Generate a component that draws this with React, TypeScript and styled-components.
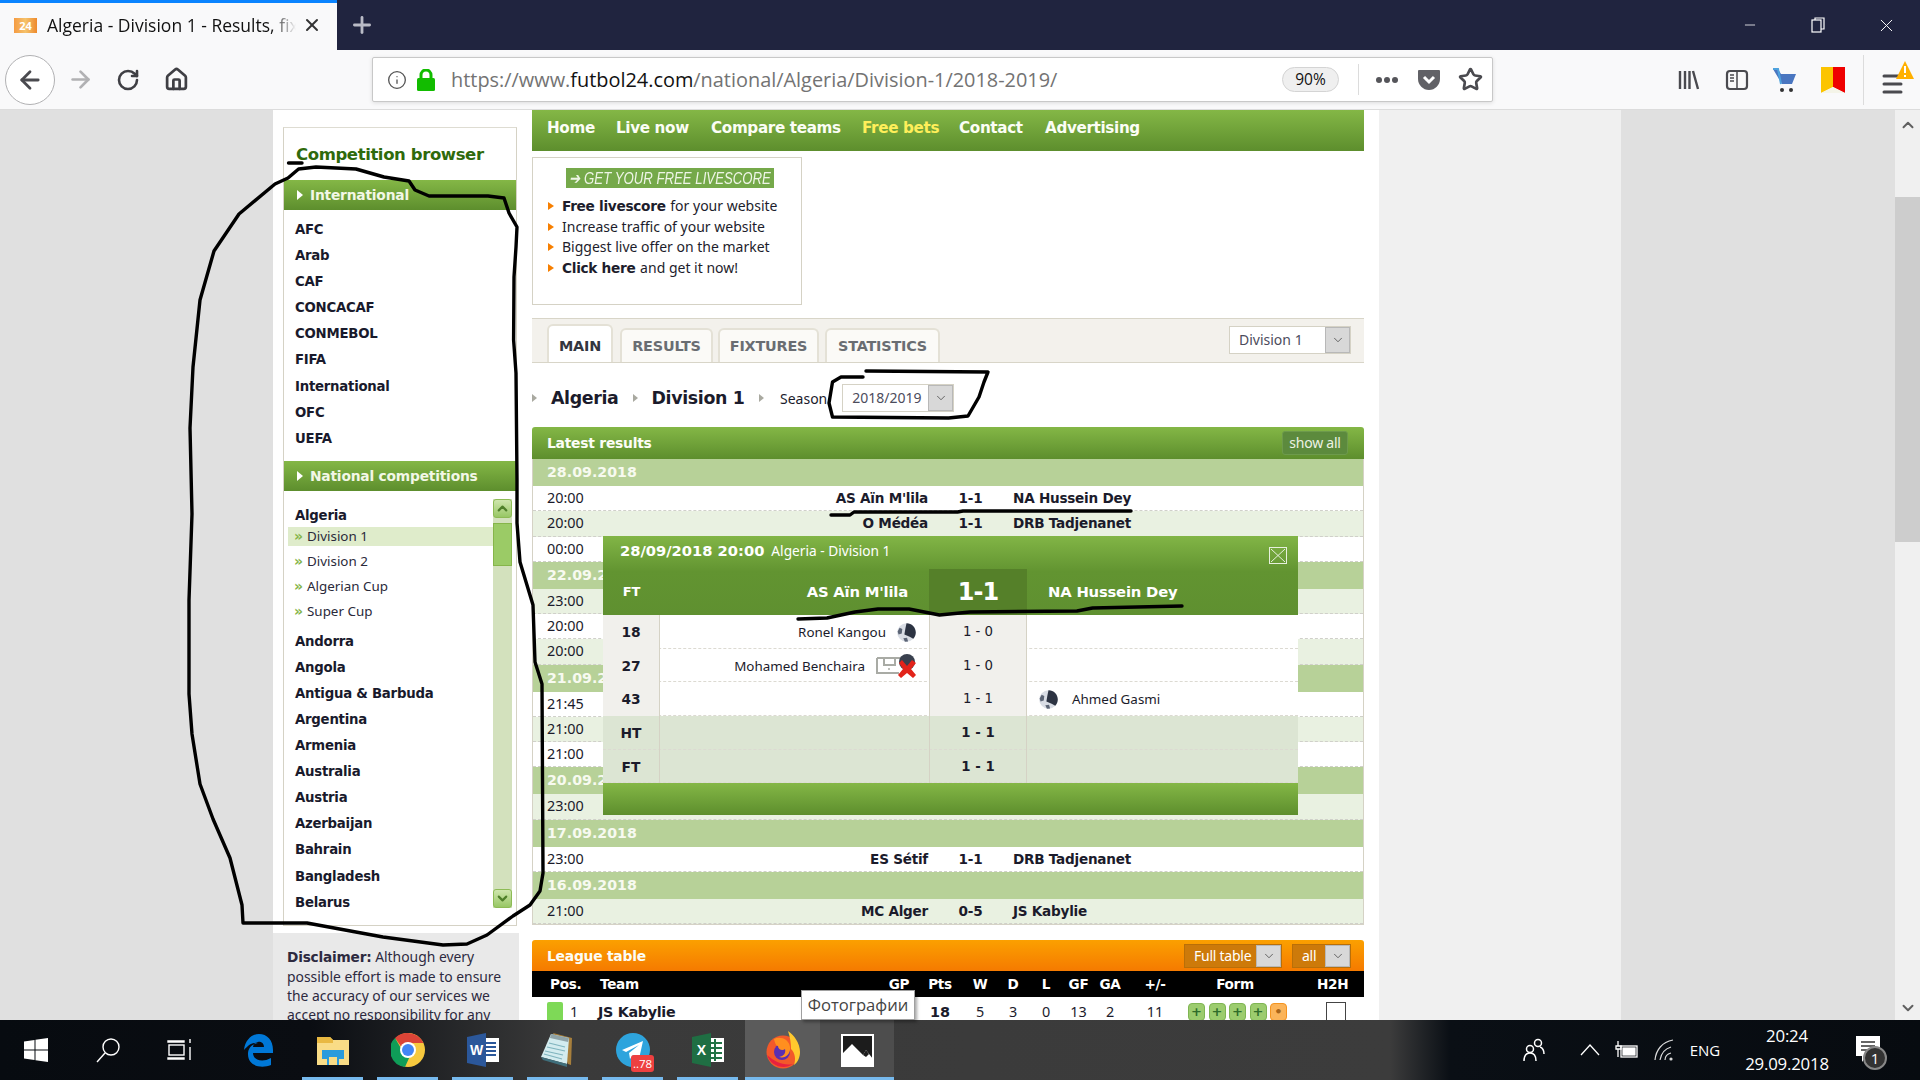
import React from "react";
import styled, { createGlobalStyle } from "styled-components";
import { ArrowLeft, ArrowRight, Home, Info, RotateCw, Star, X, Plus, Minus, ChevronDown, ChevronUp } from "lucide-react";

const UI = `"Open Sans", "Noto Sans", sans-serif`;
const SITE = `"DejaVu Sans", sans-serif`;
const THIN = `"Noto Sans", "Liberation Sans", sans-serif`;
const GREEN = "linear-gradient(#84b746, #5d8e2d)";

const GlobalStyle = createGlobalStyle`
  html, body { margin: 0; padding: 0; background: #fff; overflow: hidden; }
  * { box-sizing: border-box; }
`;

const Root = styled.div`
  position: relative;
  width: 1920px;
  height: 1080px;
  overflow: hidden;
  display: flex;
  flex-direction: column;
  font-family: ${SITE};
  color: #1b1b2b;
`;

/* browser chrome */
const TabBar = styled.div`
  height: 50px;
  background: #20243f;
  display: flex;
  align-items: center;
`;
const ActiveTab = styled.div`
  width: 337px;
  height: 50px;
  background: #f9f9fa;
  border-top: 3px solid #0a84ff;
  display: flex;
  align-items: center;
  padding: 0 0 3px 14px;
  gap: 10px;
  font: 17.5px ${UI};
  color: #111;
`;
const Favicon = styled.div`
  width: 23px;
  height: 15px;
  background: linear-gradient(90deg, #f59b42, #f5c26b 50%, #ee8a2c);
  color: #fff;
  font: bold 11px ${UI};
  text-align: center;
  line-height: 15px;
  flex: none;
`;
const TabTitle = styled.div`
  width: 249px;
  white-space: nowrap;
  overflow: hidden;
  -webkit-mask-image: linear-gradient(90deg, #000 90%, transparent);
  mask-image: linear-gradient(90deg, #000 90%, transparent);
`;
const NewTab = styled.div`
  margin-left: 12px;
  color: #b9bbc6;
  display: flex;
`;
const WindowControls = styled.div`
  margin-left: auto;
  display: flex;
  color: #fff;
`;
const WindowButton = styled.div`
  width: 68px;
  height: 50px;
  display: flex;
  align-items: center;
  justify-content: center;
`;
const NavBar = styled.div`
  height: 60px;
  background: #f9f9fa;
  border-bottom: 1px solid #dcdcdc;
  display: flex;
  align-items: center;
  padding-left: 5px;
  color: #4a4a4f;
`;
const BackCircle = styled.div`
  width: 50px;
  height: 50px;
  border-radius: 50%;
  border: 1px solid #b1b1b3;
  background: #fff;
  display: flex;
  align-items: center;
  justify-content: center;
`;
const NavIcon = styled.div<{ $w: number; $faded?: boolean }>`
  width: ${(p) => p.$w}px;
  display: flex;
  justify-content: center;
  color: ${(p) => (p.$faded ? "#b1b1b3" : "#3f3f44")};
`;
const UrlBar = styled.div`
  margin-left: 171px;
  width: 1121px;
  height: 45px;
  background: #fff;
  border: 1px solid #c8c8c8;
  border-radius: 2px;
  box-shadow: 0 1px 4px rgba(0, 0, 0, 0.12);
  display: flex;
  align-items: center;
  padding-left: 14px;
`;
const Url = styled.div`
  margin-left: 16px;
  font: 19.9px ${UI};
  color: #737373;
  white-space: nowrap;
  width: 831px;
  b { font-weight: 400; color: #111; }
`;
const Zoom = styled.div`
  width: 57px;
  height: 25px;
  border-radius: 13px;
  background: #efefef;
  border: 1px solid #d4d4d4;
  font: 15.5px/23px ${UI};
  color: #111;
  text-align: center;
`;
const UrlDivider = styled.div`
  width: 1px;
  height: 31px;
  background: #dcdcdc;
  margin: 0 16px 0 19px;
`;
const Tools = styled.div`
  display: flex;
  align-items: center;
  margin-left: 172px;
  position: relative;
`;
const ToolSlot = styled.div`
  width: 48px;
  display: flex;
  justify-content: center;
`;
const ToolDivider = styled.div`
  width: 1px;
  height: 50px;
  background: #dcdcdc;
  margin: 0 18px 0 6px;
`;

/* page */
const Viewport = styled.div`
  height: 910px;
  display: flex;
  overflow: hidden;
`;
const Gutter = styled.div<{ $w: number; $c: string }>`
  width: ${(p) => p.$w}px;
  background: ${(p) => p.$c};
  flex: none;
`;
const SideColumn = styled.div`
  width: 259px;
  flex: none;
  background: #fff;
  padding-top: 17px;
`;
const SideBox = styled.div`
  margin-left: 10px;
  width: 234px;
  height: 799px;
  border: 1px solid #d5d2c5;
  border-top-color: #dedcd2;
`;
const SideTitle = styled.h2`
  margin: 0;
  height: 52px;
  padding: 17px 0 0 12px;
  font: bold 16.5px/20px ${SITE};
  letter-spacing: -0.4px;
  color: #2f6a0c;
`;
const Band = styled.div`
  height: 30px;
  background: ${GREEN};
  color: #f2f7e6;
  font: bold 13.8px/30px ${SITE};
  letter-spacing: -0.2px;
  display: flex;
  align-items: center;
  gap: 7px;
  padding-left: 13px;
  &::before {
    content: "";
    border-left: 6px solid #fff;
    border-top: 5px solid transparent;
    border-bottom: 5px solid transparent;
  }
`;
const IntlList = styled.div`
  padding: 6.5px 0 8.5px 0;
`;
const Country = styled.div<{ $h?: number }>`
  height: ${(p) => p.$h ?? 26.2}px;
  padding-left: 11px;
  font: bold 13.3px/26px ${SITE};
  letter-spacing: -0.25px;
  color: #191a2c;
`;
const NationalArea = styled.div`
  display: flex;
`;
const NationalList = styled.div`
  width: 209px;
  padding-top: 12px;
`;
const SubList = styled.div`
  padding: 0 0 2px 4px;
`;
const SubItem = styled.div<{ $active?: boolean }>`
  height: 19px;
  margin-bottom: 6px;
  padding-left: 6px;
  display: flex;
  align-items: center;
  gap: 5px;
  font: 13.4px/19px ${THIN};
  color: #2a2a3a;
  background: ${(p) => (p.$active ? "#dfeccb" : "transparent")};
  &::before {
    content: "»";
    color: #86b54a;
    font: bold 14px/14px ${SITE};
    width: 8px;
  }
`;
const ListScroll = styled.div`
  width: 19px;
  height: 409px;
  margin-top: 8px;
  background: #d3e1bd;
  display: flex;
  flex-direction: column;
  justify-content: space-between;
  position: relative;
`;
const ListArrow = styled.div`
  width: 19px;
  height: 19px;
  border: 1px solid #8dbb55;
  border-radius: 3px;
  background: linear-gradient(#cfe6ae, #98c765);
  color: #4f7f2a;
  display: flex;
  align-items: center;
  justify-content: center;
`;
const ListThumb = styled.div`
  position: absolute;
  top: 24px;
  left: 0;
  width: 19px;
  height: 43px;
  background: #9bcb66;
  border: 1px solid #86b54a;
`;
const Disclaimer = styled.div`
  margin: 7px 0 0 -10px;
  width: 246px;
  background: #e9e9e9;
  padding: 14px 4px 0 14px;
  font: 13.9px/19px ${THIN};
  color: #2d2a3f;
  b { font-family: ${SITE}; font-size: 13.7px; letter-spacing: -0.2px; }
`;
const SideInner = styled.div`
  margin-left: 10px;
`;

const Main = styled.div`
  width: 832px;
  flex: none;
  background: #fff;
  display: flex;
  flex-direction: column;
  & > * { flex-shrink: 0; }
`;
const TopNav = styled.nav`
  height: 41px;
  background: ${GREEN};
  display: flex;
  align-items: center;
  padding: 0 0 5px 15px;
`;
const NavLink = styled.a<{ $hot?: boolean; $w: number }>`
  width: ${(p) => p.$w}px;
  font: bold 15.2px/28px ${SITE};
  letter-spacing: -0.35px;
  color: ${(p) => (p.$hot ? "#ffef5a" : "#fbfdf5")};
  white-space: nowrap;
`;
const AdBox = styled.div`
  margin-top: 6px;
  width: 270px;
  height: 148px;
  border: 1px solid #d5d2c5;
  padding: 10px 0 0 15px;
`;
const AdBanner = styled.div`
  margin-left: 18px;
  width: 208px;
  height: 20px;
  background: #75a94a;
  color: #eef5e6;
  font: italic 16.5px/20px "Liberation Sans", sans-serif;
  text-align: center;
  white-space: nowrap;
  margin-bottom: 8px;
  overflow: hidden;
  span {
    display: inline-block;
    transform: scaleX(0.8);
    transform-origin: center;
    margin: 0 -30px;
  }
`;
const AdLine = styled.div`
  height: 20.6px;
  display: flex;
  align-items: center;
  gap: 8px;
  font: 14px/20px ${THIN};
  white-space: nowrap;
  color: #1d1d2c;
  b { font-family: ${SITE}; font-size: 13.7px; letter-spacing: -0.3px; margin-right: 1px; }
  &::before {
    content: "";
    border-left: 6px solid #f77f00;
    border-top: 4px solid transparent;
    border-bottom: 4px solid transparent;
  }
`;
const TabStrip = styled.div`
  margin-top: 13px;
  height: 45px;
  background: #f3f1ec;
  border-top: 1px solid #d8d5c8;
  border-bottom: 1px solid #d8d5c8;
  display: flex;
  align-items: flex-end;
  padding-left: 15px;
  position: relative;
`;
const SiteTab = styled.div<{ $w: number; $active?: boolean; $gap: number }>`
  width: ${(p) => p.$w}px;
  margin-right: ${(p) => p.$gap}px;
  height: ${(p) => (p.$active ? 38 : 34)}px;
  background: ${(p) => (p.$active ? "#fff" : "#fbfaf7")};
  border: 2px solid #e4e1d6;
  border-bottom: none;
  border-radius: 6px 6px 0 0;
  padding-top: ${(p) => (p.$active ? 4 : 0)}px;
  font: bold 14.4px/32px ${SITE};
  letter-spacing: -0.2px;
  color: ${(p) => (p.$active ? "#33363f" : "#6a6d72")};
  text-align: center;
`;
const Select = styled.div<{ $w: number; $h?: number; $tone?: string; $color?: string }>`
  width: ${(p) => p.$w}px;
  height: ${(p) => p.$h ?? 28}px;
  flex: none;
  display: flex;
  background: ${(p) => p.$tone ?? "#fff"};
  color: ${(p) => p.$color ?? "#4c4c5c"};
  font: 14px/${(p) => (p.$h ?? 28) - 2}px ${THIN};
  padding-left: 9px;
  justify-content: space-between;
  border: 1px solid ${(p) => (p.$tone ? "#b96f08" : "#d5d2c5")};
`;
const SelectArrow = styled.div`
  width: 25px;
  background: #d8d8d8;
  border: 1px solid #b8b8b8;
  color: #333;
  display: flex;
  align-items: center;
  justify-content: center;
`;
const StripSelect = styled.div`
  position: absolute;
  right: 13px;
  top: 7px;
`;
const Crumbs = styled.div`
  height: 64px;
  display: flex;
  align-items: center;
  padding-top: 6px;
`;
const CrumbArrow = styled.span`
  border-left: 5px solid #a9a9a0;
  border-top: 4px solid transparent;
  border-bottom: 4px solid transparent;
  flex: none;
`;
const CrumbName = styled.span`
  font: bold 17.4px/24px ${SITE};
  letter-spacing: -0.35px;
  margin: 0 14px;
`;
const SeasonLabel = styled.span`
  margin: 1px 15px 0 16.5px;
  font: 14px/20px ${THIN};
`;
const PanelHead = styled.div<{ $orange?: boolean }>`
  height: ${(p) => (p.$orange ? 31 : 32)}px;
  background: ${(p) => (p.$orange ? "linear-gradient(#fba000, #f57a00)" : GREEN)};
  border-radius: 3px 3px 0 0;
  display: flex;
  align-items: center;
  padding: 0 16px 0 15px;
  color: #fcfdf6;
  font: bold 13.9px/20px ${SITE};
  letter-spacing: -0.25px;
`;
const PanelTitle = styled.div`
  margin-right: auto;
`;
const ShowAll = styled.div`
  width: 66px;
  height: 24px;
  background: #5c8a3d;
  border: 1px solid #6d9a4c;
  border-radius: 3px;
  font: 14px/22px ${THIN};
  color: #eef3e4;
  text-align: center;
`;
const Results = styled.div`
  height: 466px;
  border: 1px solid #d5d2c5;
  border-top: none;
  display: flex;
  flex-direction: column;
`;
const DateRow = styled.div`
  flex: 1;
  background: #b7d198;
  color: #f7faf0;
  font: bold 14.2px/27px ${SITE};
  padding-left: 14px;
`;
const MatchRow = styled.div<{ $alt?: boolean }>`
  flex: 1;
  display: grid;
  grid-template-columns: 119px 276px 85px 1fr;
  align-items: center;
  background: ${(p) => (p.$alt ? "#e9f1e1" : "#fff")};
  border-bottom: 1px dashed #d0d0ca;
  font: bold 13.6px/20px ${SITE};
  letter-spacing: -0.25px;
  span:first-child { font: 14.4px/20px ${THIN}; padding-left: 14px; letter-spacing: 0; }
  span:nth-child(2) { text-align: right; }
  span:nth-child(3) { text-align: center; }
`;
const League = styled.div`
  margin-top: 15px;
`;
const LeagueSelects = styled.div`
  display: flex;
  gap: 10px;
  margin-right: -3px;
`;
const LeagueGrid = styled.div<{ $head?: boolean }>`
  height: ${(p) => (p.$head ? 26 : 28)}px;
  background: ${(p) => (p.$head ? "#000" : "#fff")};
  color: ${(p) => (p.$head ? "#fff" : "#1b1b2b")};
  display: grid;
  grid-template-columns: 66px 282px 38px 44px 36px 30px 36px 29px 34px 56px 104px 1fr;
  align-items: center;
  text-align: center;
  font: ${(p) => (p.$head ? "bold 13.6px/26px" : "14.4px/30px")} ${(p) => (p.$head ? SITE : THIN)};
  letter-spacing: ${(p) => (p.$head ? "-0.3px" : "0")};
`;
const LeftCell = styled.span<{ $pad: number; $bold?: boolean }>`
  text-align: left;
  padding-left: ${(p) => p.$pad}px;
  font-family: ${(p) => (p.$bold ? SITE : "inherit")};
  font-weight: ${(p) => (p.$bold ? "bold" : "inherit")};
  ${(p) => p.$bold && "font-size: 14.3px; letter-spacing: -0.3px;"}
`;
const Points = styled.b`
  font: bold 14.4px/30px ${SITE};
`;
const PosCell = styled.span`
  display: flex;
  align-items: center;
  gap: 7px;
  padding-left: 15px;
  &::before {
    content: "";
    width: 16px;
    height: 20px;
    border-radius: 2px;
    background: #7ed957;
  }
`;
const FormCell = styled.span`
  display: flex;
  gap: 3.5px;
  padding-left: 5px;
`;
const FormPill = styled.span<{ $orange?: boolean }>`
  width: 17px;
  height: 18px;
  border-radius: 4px;
  background: ${(p) => (p.$orange ? "#fbb45a" : "#9ccc6e")};
  border: 1px solid ${(p) => (p.$orange ? "#f5941f" : "#7fb553")};
  color: ${(p) => (p.$orange ? "#a8651a" : "#2f6d2a")};
  font: bold 13px/15px ${SITE};
  text-align: center;
`;
const H2H = styled.span`
  width: 20px;
  height: 20px;
  margin-left: 39px;
  border: 1px solid #444;
  background: #fff;
`;

/* match popup */
const Popup = styled.div`
  position: absolute;
  left: 603px;
  top: 536px;
  width: 695px;
  height: 279px;
  background: #fff;
  display: flex;
  flex-direction: column;
`;
const PopHead = styled.div`
  height: 79px;
  background: linear-gradient(#82b546 0, #629431 45%, #5f9030);
  color: #fff;
`;
const PopTitle = styled.div`
  height: 33px;
  padding: 4px 0 0 17px;
  display: flex;
  gap: 7px;
  position: relative;
  font: bold 14.7px/21px ${SITE};
  span { font: 13.7px/22px ${THIN}; font-weight: 400; }
`;
const PopClose = styled.div`
  position: absolute;
  right: 11px;
  top: 11px;
  width: 18px;
  height: 17px;
  border: 1px solid #e7f0dd;
  display: flex;
  color: #e7f0dd;
`;
const PopTeams = styled.div`
  display: grid;
  grid-template-columns: 57px 269px 98px 1fr;
  height: 46px;
  align-items: center;
  font: bold 14.8px/46px ${SITE};
  letter-spacing: -0.2px;
`;
const PopFt = styled.span`
  text-align: center;
  font-size: 13px;
`;
const PopHome = styled.span`
  text-align: right;
  padding-right: 21px;
`;
const PopScore = styled.span`
  height: 46px;
  background: #558029;
  text-align: center;
  font: bold 24px/46px ${SITE};
  letter-spacing: -1px;
`;
const PopAway = styled.span`
  padding-left: 21px;
`;
const EventRow = styled.div<{ $summary?: boolean }>`
  display: grid;
  grid-template-columns: 57px 269px 98px 1fr;
  height: 33.7px;
  background: ${(p) => (p.$summary ? "#dce5d3" : "#fff")};
  border-bottom: 1px dashed #dcdad2;
  font: 13.4px/34px ${THIN};
  text-align: center;
`;
const EventMinute = styled.div<{ $summary?: boolean }>`
  background: ${(p) => (p.$summary ? "transparent" : "#f1f0ec")};
  border-right: 1px solid #d5d2c5;
  font: bold 13.8px/34px ${SITE};
`;
const EventHome = styled.div`
  display: flex;
  align-items: center;
  justify-content: flex-end;
  padding-right: 13px;
  gap: 11px;
`;
const EventMid = styled.div<{ $summary?: boolean }>`
  background: ${(p) => (p.$summary ? "transparent" : "#f1f0ec")};
  border-left: 1px solid #d5d2c5;
  border-right: 1px solid #d5d2c5;
  font: ${(p) => (p.$summary ? "bold 13.3px/34px" : "13.3px/34px")} ${SITE};
`;
const EventAway = styled.div`
  display: flex;
  align-items: center;
  padding-left: 12px;
  gap: 14px;
`;
const PopFoot = styled.div`
  flex: 1;
  background: ${GREEN};
`;

const PageScroll = styled.div`
  width: 25px;
  flex: none;
  background: #f0f0f0;
  position: relative;
  display: flex;
  flex-direction: column;
  align-items: center;
  justify-content: space-between;
  padding: 3px 0;
  color: #606060;
`;
const PageThumb = styled.div`
  position: absolute;
  top: 87px;
  left: 0;
  width: 25px;
  height: 345px;
  background: #cdcdcd;
`;

/* taskbar */
const Taskbar = styled.div`
  height: 60px;
  background: linear-gradient(90deg, #070b10 0, #0a0d12 310px, #3a3a3a 560px, #3c3c3c 1390px, #0a0f15 1450px, #070b10 100%);
  display: flex;
  align-items: center;
  color: #fff;
`;
const TaskSlot = styled.div<{ $w: number; $running?: boolean; $tone?: string; $inset?: number }>`
  width: ${(p) => p.$w}px;
  height: 60px;
  flex: none;
  background: ${(p) => p.$tone ?? "transparent"};
  display: flex;
  align-items: center;
  justify-content: center;
  position: relative;
  &::after {
    content: "";
    position: absolute;
    bottom: 0;
    left: ${(p) => p.$inset ?? 7}px;
    right: ${(p) => p.$inset ?? 7}px;
    height: ${(p) => (p.$running ? 3 : 0)}px;
    background: #76b9ed;
  }
`;
const Tray = styled.div`
  margin-left: auto;
  display: flex;
  align-items: center;
  padding-right: 30px;
  font: 15px ${UI};
`;
const TrayIcon = styled.div<{ $w: number }>`
  width: ${(p) => p.$w}px;
  display: flex;
  justify-content: center;
`;
const Clock = styled.div`
  width: 118px;
  text-align: center;
  font: 16.8px/28px ${UI};
  letter-spacing: -0.2px;
`;
const BadgeWrap = styled.div`
  position: relative;
  width: 44px;
  display: flex;
  justify-content: center;
`;
const NotifyBadge = styled.div`
  position: absolute;
  right: 3px;
  top: 10px;
  width: 24px;
  height: 24px;
  border-radius: 50%;
  background: #333;
  border: 2px solid #888;
  font: 15px/20px ${UI};
  text-align: center;
`;
const TgBadge = styled.div`
  position: absolute;
  left: 36px;
  top: 35px;
  width: 23px;
  height: 17px;
  border-radius: 3px;
  background: #ee4040;
  font: 11.5px/17px ${UI};
  text-align: center;
`;
const Tooltip = styled.div`
  position: absolute;
  left: 801px;
  top: 990px;
  width: 114px;
  height: 30px;
  background: #fff;
  border: 1px solid #a0a0a0;
  box-shadow: 2px 2px 3px rgba(0, 0, 0, 0.35);
  font: 16.6px/28px ${UI};
  text-align: center;
  color: #444;
  z-index: 3;
`;
const Scribble = styled.svg`
  position: absolute;
  left: 0;
  top: 0;
  pointer-events: none;
  z-index: 2;
`;

const Ball = () => (
  <svg width="19" height="19" viewBox="0 0 18 18">
    <circle cx="9" cy="9" r="8.8" fill="#d9dde5" />
    <path d="M9 .2c5 0 8.8 4 8.8 8.8 0 2.4-1 4.5-2.4 6L12 13 7 11l1-6 1-4.8z" fill="#2c3342" />
    <path d="M2.5 4.5l2.5 1.2L4.5 10 1.5 11 .6 8zM6 14.5l3.5-.6 1 3.6-3 .2z" fill="#5b6475" />
  </svg>
);

const RedCardGoal = () => (
  <svg width="40" height="24" viewBox="0 0 40 24">
    <path d="M1 4h24M1 4v15h22M8 4v7h11V4" fill="none" stroke="#a9aba5" strokeWidth="2" />
    <circle cx="13" cy="15" r="1" fill="#a9aba5" />
    <circle cx="31" cy="8" r="8" fill="#39404e" />
    <path d="M31 12l5-6 4 3-5 6 5 6-3 3-6-5-6 5-3-3 5-6-4-6 3-3z" fill="#e2231a" />
  </svg>
);

const Pocket = () => (
  <svg width="24" height="24" viewBox="0 0 24 24">
    <path d="M2 2h20a1 1 0 0 1 1 1v8c0 6-5 11-11 11S1 17 1 11V3a1 1 0 0 1 1-1z" fill="#616166" />
    <path d="M7 9l5 5 5-5" fill="none" stroke="#fff" strokeWidth="3" />
  </svg>
);
const LibraryIcon = () => (
  <svg width="24" height="24" viewBox="0 0 24 24" stroke="#4a4a4f" strokeWidth="2.4" fill="none">
    <path d="M3 3v18M8 3v18M12.5 3v18M16 3l5 18" />
  </svg>
);
const SidebarIcon = () => (
  <svg width="24" height="24" viewBox="0 0 24 24" fill="none" stroke="#4a4a4f" strokeWidth="2.2">
    <rect x="2" y="3" width="20" height="18" rx="3" />
    <path d="M12 3v18M5 7h4M5 10h4M5 13h4" strokeWidth="1.5" />
  </svg>
);
const Cart = () => (
  <svg width="26" height="26" viewBox="0 0 26 26">
    <path d="M1 2h5l3 5h15l-4 10H10z" fill="#4a76c0" />
    <path d="M1 2h5l3 15" fill="none" stroke="#4ea2dd" strokeWidth="2" />
    <circle cx="10" cy="23" r="2" fill="#333" />
    <circle cx="19" cy="23" r="2" fill="#333" />
  </svg>
);
const BookmarkFlag = () => (
  <svg width="24" height="26" viewBox="0 0 24 26">
    <path d="M0 0h12v20L0 26z" fill="#fcc400" />
    <path d="M12 0h12v26l-12-6z" fill="#ef0000" />
    <path d="M12 20l12 6H0z" fill="#f4f4e8" />
  </svg>
);
const MenuIcon = () => (
  <svg width="34" height="42" viewBox="0 0 34 42">
    <path d="M2 17h17M2 25h17M2 33h17" stroke="#4a4a4f" strokeWidth="3" strokeLinecap="round" />
    <path d="M23 2l9 18H14z" fill="#ffb000" />
    <path d="M23 7v7M23 16v2" stroke="#fff" strokeWidth="2" />
  </svg>
);
const Lock = () => (
  <svg width="18" height="22" viewBox="0 0 18 22">
    <path d="M4 10V6a5 5 0 0 1 10 0v4" fill="none" stroke="#12bc00" strokeWidth="3" />
    <rect x="0" y="9" width="18" height="13" rx="1.5" fill="#12bc00" />
  </svg>
);
const WinLogo = () => (
  <svg width="24" height="24" viewBox="0 0 24 24" fill="#fff">
    <path d="M0 3.5L10.5 2v9.5H0zM11.5 1.8L24 0v11.5H11.5zM0 12.5h10.5V22L0 20.5zM11.5 12.5H24V24l-12.5-1.8z" />
  </svg>
);
const SearchGlyph = () => (
  <svg width="26" height="26" viewBox="0 0 26 26" fill="none" stroke="#fff" strokeWidth="1.4">
    <circle cx="16" cy="10" r="8" />
    <path d="M10 16L2 25" />
  </svg>
);
const TaskView = () => (
  <svg width="26" height="24" viewBox="0 0 26 24" fill="none" stroke="#fff" strokeWidth="1.4">
    <path d="M1 3h16v1H1zM1 20h16v1H1z" />
    <rect x="2" y="7" width="15" height="10" />
    <path d="M23 1v4M23 9v13" />
  </svg>
);
const Edge = () => (
  <svg width="32" height="34" viewBox="0 0 32 34">
    <path d="M2 17C3 7 10 1 17 1c8 0 14 6 14 16v3H11c0 7 9 10 18 5v7c-10 4-23 1-23-11 0-6 4-10 10-11-7-1-11 4-14 7zM11 14h11c0-7-10-7-11 0z" fill="#0078d7" />
  </svg>
);
const Folder = () => (
  <svg width="32" height="30" viewBox="0 0 32 30">
    <path d="M0 2h13l3 3h16v25H0z" fill="#f9dc86" />
    <path d="M0 2h13l3 3v3H0z" fill="#e9b942" />
    <path d="M5 24V15h22v9h-5v6H10v-6z" fill="#2a9bdc" />
    <path d="M12 22h8v8h-8z" fill="#f9dc86" />
  </svg>
);
const Chrome = () => (
  <svg width="34" height="34" viewBox="0 0 34 34">
    <circle cx="17" cy="17" r="17" fill="#f7c93e" />
    <path d="M17 0a17 17 0 0 1 15.5 10H17a7 7 0 0 0-6.5 4L4 5A17 17 0 0 1 17 0z" fill="#db4437" />
    <path d="M4 5l7 12a7 7 0 0 0 8 6l-5 11A17 17 0 0 1 4 5z" fill="#0f9d58" />
    <circle cx="17" cy="17" r="8" fill="#fff" />
    <circle cx="17" cy="17" r="6" fill="#4285f4" />
  </svg>
);
const Word = () => (
  <svg width="32" height="34" viewBox="0 0 32 34">
    <rect x="12" y="5" width="20" height="24" fill="#fff" />
    <path d="M15 10h14M15 14h14M15 18h14M15 22h14" stroke="#2b579a" strokeWidth="2" />
    <path d="M0 4l19-4v34L0 30z" fill="#2b579a" />
    <text x="9.5" y="22" fill="#fff" fontSize="14" fontWeight="700" textAnchor="middle" fontFamily="Liberation Sans">W</text>
  </svg>
);
const Notepad = () => (
  <svg width="34" height="34" viewBox="0 0 34 34">
    <path d="M12 0l19 5-1 27-3-1z" fill="#a77f3c" />
    <path d="M10 1l18 4-2 26L0 24z" fill="#d3ecef" />
    <path d="M10 1l18 4-1 4-18-4z" fill="#8fa3a8" />
    <path d="M8 10l16 4M6 14l18 4M4 18l18 4M3 21l18 5" stroke="#7fb4be" strokeWidth="1.2" />
    <path d="M0 24l26 7v3L2 27z" fill="#3f6f7c" />
  </svg>
);
const Telegram = () => (
  <svg width="34" height="34" viewBox="0 0 34 34">
    <circle cx="17" cy="17" r="17" fill="#2ea4dd" />
    <path d="M6 17L27 8l-4 18-6-4-3 4-1-6 10-8-13 7z" fill="#fff" />
  </svg>
);
const Excel = () => (
  <svg width="32" height="34" viewBox="0 0 32 34">
    <rect x="13" y="5" width="19" height="24" fill="#fff" />
    <path d="M16 10h14M16 15h14M16 20h14M16 25h14M23 6v22" stroke="#217346" strokeWidth="2" />
    <path d="M0 4l19-4v34L0 30z" fill="#1f6e43" />
    <text x="9.5" y="22" fill="#fff" fontSize="14" fontWeight="700" textAnchor="middle" fontFamily="Liberation Sans">X</text>
  </svg>
);
const Firefox = () => (
  <svg width="34" height="38" viewBox="0 0 34 38">
    <circle cx="17" cy="21" r="16.5" fill="#f2592a" />
    <path d="M22 0c6 4 12 12 12 21 0 5-2 10-6 13 2-6 1-12-3-16 0-6-1-12-3-18z" fill="#ffc92e" />
    <circle cx="16" cy="21" r="8" fill="#5a2fb0" />
    <path d="M8 8c6-3 15 0 16 8 1 7-5 12-11 10 5-1 7-4 6-8-2 2-7 1-7-3-2 0-3-3-4-7z" fill="#ff8f1f" />
    <path d="M1 24c3 10 16 16 26 9-9 2-18-2-26-9z" fill="#e8213f" />
  </svg>
);
const Photos = () => (
  <svg width="33" height="33" viewBox="0 0 33 33">
    <rect width="33" height="33" fill="#fff" />
    <rect x="2" y="2" width="29" height="29" fill="#1c1c1c" />
    <path d="M1 20l10-10 11 11 3-5 7 9v7H1z" fill="#fff" />
    <path d="M22 21l3-5 3 4-3 3z" fill="#1c1c1c" />
  </svg>
);

type Row = { date: string } | { time: string; home?: string; score?: string; away?: string };

const rows: Row[] = [
  { date: "28.09.2018" },
  { time: "20:00", home: "AS Aïn M'lila", score: "1-1", away: "NA Hussein Dey" },
  { time: "20:00", home: "O Médéa", score: "1-1", away: "DRB Tadjenanet" },
  { time: "00:00" },
  { date: "22.09.2018" },
  { time: "23:00" },
  { time: "20:00" },
  { time: "20:00" },
  { date: "21.09.2018" },
  { time: "21:45" },
  { time: "21:00" },
  { time: "21:00" },
  { date: "20.09.2018" },
  { time: "23:00" },
  { date: "17.09.2018" },
  { time: "23:00", home: "ES Sétif", score: "1-1", away: "DRB Tadjenanet" },
  { date: "16.09.2018" },
  { time: "21:00", home: "MC Alger", score: "0-5", away: "JS Kabylie" },
];

const intl = ["AFC", "Arab", "CAF", "CONCACAF", "CONMEBOL", "FIFA", "International", "OFC", "UEFA"];
const countries = ["Andorra", "Angola", "Antigua & Barbuda", "Argentina", "Armenia", "Australia", "Austria", "Azerbaijan", "Bahrain", "Bangladesh", "Belarus"];
const navLinks = [
  { label: "Home", w: 69 },
  { label: "Live now", w: 95 },
  { label: "Compare teams", w: 151 },
  { label: "Free bets", w: 97, hot: true },
  { label: "Contact", w: 86 },
  { label: "Advertising", w: 100 },
];
const heads = ["GP", "Pts", "W", "D", "L", "GF", "GA", "+/-", "Form"];
const slots = [
  { icon: <Edge /> },
  { icon: <Folder />, on: true },
  { icon: <Chrome />, on: true },
  { icon: <Word />, on: true },
  { icon: <Notepad />, on: true },
  { icon: <Telegram />, on: true, badge: true },
  { icon: <Excel />, on: true },
];

const Arrow = () => (
  <SelectArrow>
    <ChevronDown size={14} strokeWidth={1.2} />
  </SelectArrow>
);

const App = () => {
  let alt = false;
  return (
    <Root>
      <GlobalStyle />
      <TabBar>
        <ActiveTab>
          <Favicon>24</Favicon>
          <TabTitle>Algeria - Division 1 - Results, fixtures</TabTitle>
          <X size={20} strokeWidth={2.4} color="#333" style={{ marginLeft: -4 }} />
        </ActiveTab>
        <NewTab>
          <Plus size={26} strokeWidth={2.6} />
        </NewTab>
        <WindowControls>
          <WindowButton>
            <Minus size={16} strokeWidth={1.2} />
          </WindowButton>
          <WindowButton>
            <svg width="14" height="16" viewBox="0 0 14 16" fill="none" stroke="#fff" strokeWidth="1.2">
              <rect x="1" y="3" width="9" height="12" />
              <path d="M4 3V1h9v11h-3" />
            </svg>
          </WindowButton>
          <WindowButton>
            <X size={21} strokeWidth={1.1} />
          </WindowButton>
        </WindowControls>
      </TabBar>
      <NavBar>
        <BackCircle>
          <ArrowLeft size={28} strokeWidth={2.4} />
        </BackCircle>
        <NavIcon $w={50} $faded>
          <ArrowRight size={27} strokeWidth={2.4} />
        </NavIcon>
        <NavIcon $w={46}>
          <RotateCw size={24} strokeWidth={2.6} />
        </NavIcon>
        <NavIcon $w={50}>
          <Home size={25} strokeWidth={2.6} />
        </NavIcon>
        <UrlBar>
          <Info size={20} strokeWidth={1.6} color="#555" />
          <span style={{ width: 10 }} />
          <Lock />
          <Url>
            https://www.<b>futbol24.com</b>/national/Algeria/Division-1/2018-2019/
          </Url>
          <Zoom>90%</Zoom>
          <UrlDivider />
          <svg width="24" height="8" viewBox="0 0 24 8" fill="#55555a">
            <circle cx="4" cy="4" r="3" />
            <circle cx="12" cy="4" r="3" />
            <circle cx="20" cy="4" r="3" />
          </svg>
          <span style={{ width: 18 }} />
          <Pocket />
          <span style={{ width: 17 }} />
          <Star size={25} strokeWidth={2.6} color="#4a4a4f" />
        </UrlBar>
        <Tools>
          <ToolSlot><LibraryIcon /></ToolSlot>
          <ToolSlot><SidebarIcon /></ToolSlot>
          <ToolSlot><Cart /></ToolSlot>
          <ToolSlot><BookmarkFlag /></ToolSlot>
          <ToolDivider />
          <MenuIcon />
        </Tools>
      </NavBar>

      <Viewport>
        <Gutter $w={273} $c="#e0e0e0" />
        <SideColumn>
          <SideBox>
            <SideTitle>Competition browser</SideTitle>
            <Band>International</Band>
            <IntlList>
              {intl.map((name) => (
                <Country key={name}>{name}</Country>
              ))}
            </IntlList>
            <Band>National competitions</Band>
            <NationalArea>
              <NationalList>
                <Country $h={24}>Algeria</Country>
                <SubList>
                  <SubItem $active>Division 1</SubItem>
                  <SubItem>Division 2</SubItem>
                  <SubItem>Algerian Cup</SubItem>
                  <SubItem>Super Cup</SubItem>
                </SubList>
                {countries.map((name) => (
                  <Country key={name} $h={26.1}>{name}</Country>
                ))}
              </NationalList>
              <ListScroll>
                <ListThumb />
                <ListArrow><ChevronUp size={15} strokeWidth={3.4} /></ListArrow>
                <ListArrow><ChevronDown size={15} strokeWidth={3.4} /></ListArrow>
              </ListScroll>
            </NationalArea>
          </SideBox>
          <SideInner>
            <Disclaimer>
              <b>Disclaimer:</b> Although every possible effort is made to ensure the accuracy of our services we accept no responsibility for any
            </Disclaimer>
          </SideInner>
        </SideColumn>

        <Main>
          <TopNav>
            {navLinks.map((link) => (
              <NavLink key={link.label} $w={link.w} $hot={link.hot}>{link.label}</NavLink>
            ))}
          </TopNav>
          <AdBox>
            <AdBanner><span>➔ GET YOUR FREE LIVESCORE</span></AdBanner>
            <AdLine><span><b>Free livescore</b> for your website</span></AdLine>
            <AdLine>Increase traffic of your website</AdLine>
            <AdLine>Biggest live offer on the market</AdLine>
            <AdLine><span><b>Click here</b> and get it now!</span></AdLine>
          </AdBox>
          <TabStrip>
            <SiteTab $w={66} $gap={7} $active>MAIN</SiteTab>
            <SiteTab $w={93} $gap={5}>RESULTS</SiteTab>
            <SiteTab $w={101} $gap={6}>FIXTURES</SiteTab>
            <SiteTab $w={115} $gap={0}>STATISTICS</SiteTab>
            <StripSelect>
              <Select $w={122}>Division 1<Arrow /></Select>
            </StripSelect>
          </TabStrip>
          <Crumbs>
            <CrumbArrow />
            <CrumbName>Algeria</CrumbName>
            <CrumbArrow />
            <CrumbName>Division 1</CrumbName>
            <CrumbArrow />
            <SeasonLabel>Season</SeasonLabel>
            <Select $w={112}>2018/2019<Arrow /></Select>
          </Crumbs>
          <PanelHead>
            <PanelTitle>Latest results</PanelTitle>
            <ShowAll>show all</ShowAll>
          </PanelHead>
          <Results>
            {rows.map((row, i) => {
              if ("date" in row) return <DateRow key={i}>{row.date}</DateRow>;
              const isAlt = alt;
              alt = !alt;
              return (
                <MatchRow key={i} $alt={isAlt}>
                  <span>{row.time}</span>
                  <span>{row.home}</span>
                  <span>{row.score}</span>
                  <span>{row.away}</span>
                </MatchRow>
              );
            })}
          </Results>
          <League>
            <PanelHead $orange>
              <PanelTitle>League table</PanelTitle>
              <LeagueSelects>
                <Select $w={98} $h={24} $tone="#cd7a0a" $color="#fff">Full table<Arrow /></Select>
                <Select $w={59} $h={24} $tone="#cd7a0a" $color="#fff">all<Arrow /></Select>
              </LeagueSelects>
            </PanelHead>
            <LeagueGrid $head>
              <LeftCell $pad={18}>Pos.</LeftCell>
              <LeftCell $pad={2}>Team</LeftCell>
              {heads.map((h) => (
                <span key={h}>{h}</span>
              ))}
              <LeftCell $pad={30}>H2H</LeftCell>
            </LeagueGrid>
            <LeagueGrid>
              <PosCell>1</PosCell>
              <LeftCell $pad={0} $bold>JS Kabylie</LeftCell>
              <span />
              <Points>18</Points>
              <span>5</span>
              <span>3</span>
              <span>0</span>
              <span>13</span>
              <span>2</span>
              <span>11</span>
              <FormCell>
                <FormPill>+</FormPill>
                <FormPill>+</FormPill>
                <FormPill>+</FormPill>
                <FormPill>+</FormPill>
                <FormPill $orange>•</FormPill>
              </FormCell>
              <H2H />
            </LeagueGrid>
          </League>
        </Main>
        <Gutter $w={15} $c="#fff" />
        <Gutter $w={242} $c="#f0f0f0" />
        <Gutter $w={274} $c="#e0e0e0" />
        <PageScroll>
          <PageThumb />
          <ChevronUp size={18} strokeWidth={2.6} style={{ marginTop: 3 }} />
          <ChevronDown size={18} strokeWidth={2.6} />
        </PageScroll>
      </Viewport>

      <Taskbar>
        <TaskSlot $w={72}><WinLogo /></TaskSlot>
        <TaskSlot $w={72}><SearchGlyph /></TaskSlot>
        <TaskSlot $w={72}><TaskView /></TaskSlot>
        <TaskSlot $w={4} />
        {slots.map((slot, i) => (
          <TaskSlot key={i} $w={75} $running={slot.on}>
            {slot.icon}
            {slot.badge && <TgBadge>..78</TgBadge>}
          </TaskSlot>
        ))}
        <TaskSlot $w={75} $running $inset={0} $tone="#5b5b5b"><Firefox /></TaskSlot>
        <TaskSlot $w={74} $running $inset={0} $tone="#4d4d4d"><Photos /></TaskSlot>
        <Tray>
          <TrayIcon $w={76}>
            <svg width="24" height="24" viewBox="0 0 24 24" fill="none" stroke="#fff" strokeWidth="1.5">
              <circle cx="16" cy="5" r="3.5" />
              <circle cx="8" cy="11" r="3.5" />
              <path d="M2 23c0-5 2-8 6-8s6 3 6 8M18 9c3 1 4 3 4 7" />
            </svg>
          </TrayIcon>
          <TrayIcon $w={36}>
            <svg width="20" height="12" viewBox="0 0 20 12" fill="none" stroke="#fff" strokeWidth="1.3">
              <path d="M1 11L10 1l9 10" />
            </svg>
          </TrayIcon>
          <TrayIcon $w={38}>
            <svg width="24" height="20" viewBox="0 0 24 20" fill="none" stroke="#fff" strokeWidth="1.3">
              <rect x="6" y="6" width="16" height="11" />
              <rect x="8" y="8" width="12" height="7" fill="#fff" />
              <path d="M3 1v5M1 6h5v3H1zM3 9v8" />
            </svg>
          </TrayIcon>
          <TrayIcon $w={36}>
            <svg width="22" height="22" viewBox="0 0 22 22" fill="none" stroke="#ddd" strokeWidth="1.2">
              <path d="M2 21C3 11 9 3 20 1M7 21c1-6 4-11 11-13M12 21c0-3 2-6 6-7" />
              <circle cx="18" cy="20" r="1" fill="#fff" />
            </svg>
          </TrayIcon>
          <TrayIcon $w={46}>ENG</TrayIcon>
          <Clock>
            20:24
            <br />
            29.09.2018
          </Clock>
          <BadgeWrap>
            <svg width="24" height="28" viewBox="0 0 24 28">
              <path d="M0 0h24v20H10l-4 6v-6H0z" fill="#fff" />
              <path d="M5 6h14M5 10h14M5 14h9" stroke="#333" strokeWidth="1.3" />
            </svg>
            <NotifyBadge>1</NotifyBadge>
          </BadgeWrap>
        </Tray>
      </Taskbar>

      <Popup>
        <PopHead>
          <PopTitle>
            28/09/2018 20:00 <span>Algeria - Division 1</span>
            <PopClose>
              <svg width="16" height="15" viewBox="0 0 16 15" stroke="currentColor" strokeWidth="1">
                <path d="M1 1l14 13M15 1L1 14" />
              </svg>
            </PopClose>
          </PopTitle>
          <PopTeams>
            <PopFt>FT</PopFt>
            <PopHome>AS Aïn M'lila</PopHome>
            <PopScore>1-1</PopScore>
            <PopAway>NA Hussein Dey</PopAway>
          </PopTeams>
        </PopHead>
        <EventRow>
          <EventMinute>18</EventMinute>
          <EventHome>Ronel Kangou <Ball /></EventHome>
          <EventMid>1 - 0</EventMid>
          <div />
        </EventRow>
        <EventRow>
          <EventMinute>27</EventMinute>
          <EventHome>Mohamed Benchaira <RedCardGoal /></EventHome>
          <EventMid>1 - 0</EventMid>
          <div />
        </EventRow>
        <EventRow>
          <EventMinute>43</EventMinute>
          <div />
          <EventMid>1 - 1</EventMid>
          <EventAway><Ball /> Ahmed Gasmi</EventAway>
        </EventRow>
        <EventRow $summary>
          <EventMinute $summary>HT</EventMinute>
          <div />
          <EventMid $summary>1 - 1</EventMid>
          <div />
        </EventRow>
        <EventRow $summary>
          <EventMinute $summary>FT</EventMinute>
          <div />
          <EventMid $summary>1 - 1</EventMid>
          <div />
        </EventRow>
        <PopFoot />
      </Popup>

      <Tooltip>Фотографии</Tooltip>

      <Scribble width="1920" height="1080" fill="none" stroke="#000" strokeWidth="3.4" strokeLinejoin="round" strokeLinecap="round">
        <path d="M288.5 163H302" />
        <path d="M298.6 169L288 178L275 184L239 214L214 251L200 300L193 367L190 428L192 514L189 600L189 694L192 734L200 784L213 819L230 858L242 905L243 923L307 923L383 937L443 945L467 944L487 935L513 916L530 905L540 891L543 873L542 684L535 662L533 605L520 562L517 523L517 480L516 373L513.6 340L514 277L516 247L517 227L509 213L504 198L488 196L429 196L415 190L409 181L384 177L356 169L316 167Z" />
        <path d="M863 377L841 377L832.5 382L829 403L832.5 417L948.6 418L968 416L979 397L984 382L988 372L866 371" />
        <path d="M831 515L850 515L854 512L957.5 512L963 511L1131 511" />
        <path d="M798 619L827 618L855 612L878 609L909 609L939.5 615L970 612L1077 611L1092.6 608L1182 606" />
      </Scribble>
    </Root>
  );
};

export default App;
